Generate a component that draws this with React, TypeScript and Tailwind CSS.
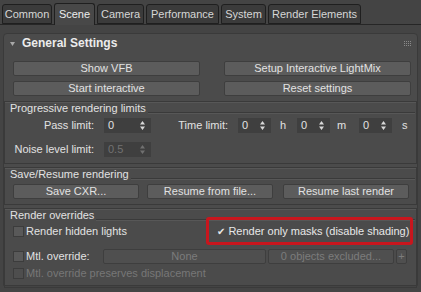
import React from 'react';

const tabs = [
  { label: 'Common', w: 'w-[50px]' },
  { label: 'Scene', w: 'w-[41px]', active: true },
  { label: 'Camera', w: 'w-[47px]' },
  { label: 'Performance', w: 'w-[73px]' },
  { label: 'System', w: 'w-[45px]' },
  { label: 'Render Elements', w: 'w-[93px]' },
];

const Btn = ({ children, className = '', disabled = false }: { children: React.ReactNode; className?: string; disabled?: boolean }) => (
  <div
    className={`flex items-center justify-center h-[15px] rounded-[2px] border border-[#3e3e3e] ${
      disabled ? 'bg-[#4f4f4f] text-[#7c7c7c]' : 'bg-[#5c5c5c] text-[#e2e2e2]'
    } ${className}`}
  >
    {children}
  </div>
);

const Arrows = ({ dim = false }: { dim?: boolean }) => (
  <svg width="5" height="9" viewBox="0 0 5 9" className="shrink-0">
    <path d="M2.5 0 L5 3.5 L0 3.5 Z M2.5 9 L5 5.5 L0 5.5 Z" fill={dim ? '#707070' : '#d8d8d8'} />
  </svg>
);

const Spin = ({ value, w, dim = false }: { value: string; w: string; dim?: boolean }) => (
  <div
    className={`flex items-center justify-between h-[15px] pl-[4px] pr-[6px] bg-[#3f3f3f] ${w} ${
      dim ? 'text-[#727272]' : 'text-[#e2e2e2]'
    }`}
  >
    <span>{value}</span>
    <Arrows dim={dim} />
  </div>
);

const Check = ({ dim = false }: { dim?: boolean }) => (
  <div className={`w-[11px] h-[11px] border border-[#3c3c3c] ${dim ? 'bg-[#4e4e4e]' : 'bg-[#595959]'}`} />
);

const Group = ({ title, className = '', children }: { title: string; className?: string; children: React.ReactNode }) => (
  <div className={`border border-[#3a3a3a] shadow-[inset_0_1px_0_#575757] ${className}`}>
    <div className="flex items-center h-[13px] pl-[5px] pr-[1px]">
      <span className="text-[#e2e2e2]">{title}</span>
      <div className="flex-1 h-[2px] ml-[2px] mt-[8px] border-t border-[#3a3a3a] border-b border-b-[#575757]" />
    </div>
    {children}
  </div>
);

export default function App() {
  return (
    <div
      className="w-[421px] h-[292px] bg-[#444444] overflow-hidden text-[11px] leading-[13px] text-[#e2e2e2]"
      style={{ fontFamily: '"Liberation Sans", Arial, sans-serif' }}
    >
      {/* tab strip */}
      <div className="flex items-end h-[25px] pl-[2px] gap-[2px] border-b border-[#262626]">
        {tabs.map((t) => (
          <div
            key={t.label}
            className={`${t.w} flex items-center justify-center rounded-t-[3px] border border-[#1f1f1f] ${
              t.active
                ? 'h-[22px] -mb-[1px] border-b-0 bg-[#484848] text-[#ededed]'
                : 'h-[20px] bg-[#3b3b3b] text-[#d6d6d6]'
            }`}
          >
            {t.label}
          </div>
        ))}
      </div>

      {/* rollout */}
      <div className="mt-[8px] ml-[3px] w-[415px] h-[253px] rounded-t-[4px] border border-[#3a3a3a] bg-[#4b4b4b]">
        <div className="flex items-center h-[19px] pl-[6px] pr-[6px]">
          <svg width="5" height="4" viewBox="0 0 5 4" className="mr-[7px]">
            <path d="M0 0 H5 L2.5 4 Z" fill="#a8a8a8" />
          </svg>
          <span className="font-bold text-[12px] text-[#ececec]">General Settings</span>
          <div className="ml-auto grid grid-cols-4 gap-[1px]">
            {Array.from({ length: 12 }).map((_, i) => (
              <div key={i} className="w-[1px] h-[1px] bg-[#8a8a8a]" />
            ))}
          </div>
        </div>

        <div className="flex flex-col gap-[5px] mt-[8px] pl-[9px]">
          <div className="flex gap-[24px]">
            <Btn className="w-[187px]">Show VFB</Btn>
            <Btn className="w-[187px]">Setup Interactive LightMix</Btn>
          </div>
          <div className="flex gap-[24px]">
            <Btn className="w-[187px]">Start interactive</Btn>
            <Btn className="w-[187px]">Reset settings</Btn>
          </div>
        </div>

        <Group title="Progressive rendering limits" className="mt-[5px] h-[63px]">
          <div className="flex items-center mt-[3px] h-[15px]">
            <span className="w-[89px] text-right">Pass limit:</span>
            <Spin value="0" w="w-[47px] ml-[10px]" />
            <span className="w-[77px] text-right">Time limit:</span>
            <Spin value="0" w="w-[33px] ml-[10px]" />
            <span className="ml-[9px] w-[17px]">h</span>
            <Spin value="0" w="w-[33px]" />
            <span className="ml-[7px] w-[22px]">m</span>
            <Spin value="0" w="w-[33px]" />
            <span className="ml-[10px]">s</span>
          </div>
          <div className="flex items-center mt-[9px] h-[15px]">
            <span className="w-[89px] text-right">Noise level limit:</span>
            <Spin value="0.5" w="w-[47px] ml-[10px]" dim />
          </div>
        </Group>

        <Group title="Save/Resume rendering" className="mt-[3px] h-[38px]">
          <div className="flex mt-[3px] pl-[8px]">
            <Btn className="w-[126px]">Save CXR...</Btn>
            <Btn className="w-[126px] ml-[8px]">Resume from file...</Btn>
            <Btn className="w-[126px] ml-[10px]">Resume last render</Btn>
          </div>
        </Group>

        <Group title="Render overrides" className="mt-[3px] h-[80px]">
          <div className="flex items-center h-[28px] -mt-[5px]">
            <div className="flex items-center pl-[8px] gap-[2px] w-[201px]">
              <Check />
              <span>Render hidden lights</span>
            </div>
            <div className="flex items-center w-[207px] h-[28px] border-[3px] border-[#c8161d] rounded-[3px] pl-[8px]">
              <span className="text-[#e8e8e8] mr-[3px]" style={{ fontFamily: '"DejaVu Sans", sans-serif', fontSize: '10px' }}>
                ✔
              </span>
              <span className="text-[#e8e8e8]">Render only masks (disable shading)</span>
            </div>
          </div>
          <div className="flex items-center h-[15px] mt-[4px] pl-[8px]">
            <Check />
            <span className="ml-[2px] w-[77px]">Mtl. override:</span>
            <Btn disabled className="w-[163px]">None</Btn>
            <Btn disabled className="w-[126px] ml-[2px]">0 objects excluded...</Btn>
            <Btn disabled className="w-[11px] ml-[2px]">+</Btn>
          </div>
          <div className="flex items-center h-[13px] mt-[3px] pl-[8px] text-[#777777]">
            <Check dim />
            <span className="ml-[2px]">Mtl. override preserves displacement</span>
          </div>
        </Group>
      </div>
    </div>
  );
}
